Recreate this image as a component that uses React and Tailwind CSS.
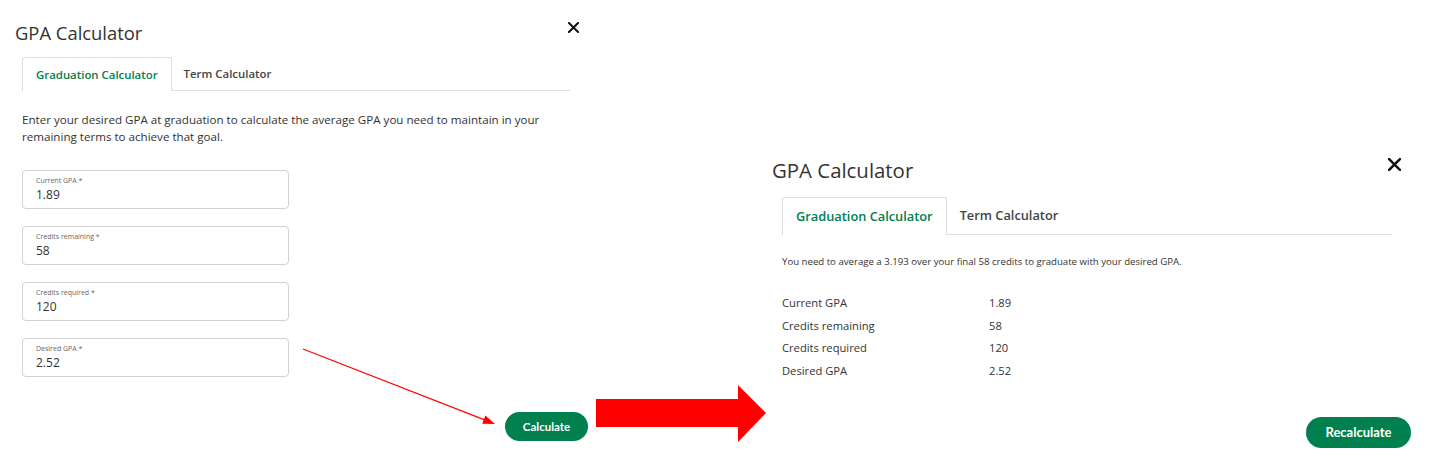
import React from "react";

const green = "#00804e";

function CloseIcon({ size = 11, stroke = 2.2 }) {
  return (
    <svg width={size} height={size} viewBox="0 0 12 12" className="block">
      <path d="M1 1 L11 11 M11 1 L1 11" stroke="#111" strokeWidth={stroke} strokeLinecap="square" fill="none" />
    </svg>
  );
}

function Field({ label, value }) {
  return (
    <div className="w-[267px] h-[39px] rounded-[4px] border border-[#d2d2d2] bg-white pl-[13px] pt-[5px]">
      <div className="text-[7px] leading-[10px] text-[#666]">{label} *</div>
      <div className="text-[12px] leading-[16px] mt-[1px] text-[#333]">{value}</div>
    </div>
  );
}

export default function App() {
  const rows = [
    ["Current GPA", "1.89"],
    ["Credits remaining", "58"],
    ["Credits required", "120"],
    ["Desired GPA", "2.52"],
  ];
  return (
    <div
      className="relative w-[1436px] h-[461px] bg-white flex items-start overflow-hidden text-[#333]"
      style={{ fontFamily: '"Open Sans", "Noto Sans", sans-serif' }}
    >
      {/* Left panel */}
      <div className="w-[588px] shrink-0 flex flex-col">
        <div className="flex items-start justify-between pl-[15px] pr-[9px] mt-[21px]">
          <div className="text-[18.4px] leading-[24px] text-[#333]">GPA Calculator</div>
          <div className="mt-[1px]">
            <CloseIcon size={11} stroke={2.2} />
          </div>
        </div>
        <div className="ml-[22px] w-[548px] mt-[12px] flex border-b border-[#dedede] h-[34px]">
          <div className="h-[34px] -mb-px px-[13px] flex items-center border-l border-t border-r border-[#dedede] rounded-t-[3px] bg-white text-[11.4px] font-semibold" style={{ color: green }}>
            Graduation Calculator
          </div>
          <div className="h-[34px] px-[12px] flex items-center text-[11.4px] font-semibold text-[#444]">
            Term Calculator
          </div>
        </div>
        <p className="ml-[22px] w-[548px] mt-[20px] text-[11.6px] leading-[17px] text-[#333]">
          Enter your desired GPA at graduation to calculate the average GPA you need to maintain in your remaining terms to achieve that goal.
        </p>
        <div className="ml-[22px] mt-[25px] flex flex-col gap-[17px]">
          <Field label="Current GPA" value="1.89" />
          <Field label="Credits remaining" value="58" />
          <Field label="Credits required" value="120" />
          <Field label="Desired GPA" value="2.52" />
        </div>
        <div className="self-end mt-[35px]">
          <button
            className="w-[83px] h-[29px] rounded-full text-white text-[11.5px] font-bold flex items-center justify-center"
            style={{ backgroundColor: green, fontFamily: 'Lato, "Open Sans", sans-serif' }}
          >
            Calculate
          </button>
        </div>
      </div>

      {/* Big red arrow */}
      <div className="ml-[8px] mt-[385px] shrink-0">
        <svg width="170" height="57" viewBox="0 0 170 57" className="block">
          <polygon points="0,14 142,14 142,0 170,28 142,57 142,42 0,42" fill="#ff0000" />
        </svg>
      </div>

      {/* Right panel */}
      <div className="ml-[6px] w-[639px] shrink-0 flex flex-col">
        <div className="flex items-start justify-between pr-[10px] mt-[156px]">
          <div className="text-[20.4px] leading-[28px] text-[#333]">GPA Calculator</div>
          <div className="mt-[2px]">
            <CloseIcon size={13} stroke={2.3} />
          </div>
        </div>
        <div className="ml-[10px] w-[610px] mt-[13px] flex border-b border-[#dedede] h-[38px]">
          <div className="h-[38px] -mb-px px-[13px] flex items-center border-l border-t border-r border-[#dedede] rounded-t-[3px] bg-white text-[12.8px] font-semibold" style={{ color: green }}>
            Graduation Calculator
          </div>
          <div className="h-[38px] px-[13px] flex items-center text-[12.8px] font-semibold text-[#444]">
            Term Calculator
          </div>
        </div>
        <p className="ml-[10px] mt-[20px] text-[9.65px] leading-[14px] text-[#333]">
          You need to average a 3.193 over your final 58 credits to graduate with your desired GPA.
        </p>
        <div className="ml-[10px] mt-[23px] grid grid-cols-[207px_1fr] text-[11.2px] text-[#333]">
          {rows.map(([k, v]) => (
            <React.Fragment key={k}>
              <div className="h-[22.7px] leading-[22.7px]">{k}</div>
              <div className="h-[22.7px] leading-[22.7px]">{v}</div>
            </React.Fragment>
          ))}
        </div>
        <div className="self-end mt-[34px]">
          <button
            className="w-[105px] h-[31px] rounded-full text-white text-[13px] font-bold flex items-center justify-center"
            style={{ backgroundColor: green, fontFamily: 'Lato, "Open Sans", sans-serif' }}
          >
            Recalculate
          </button>
        </div>
      </div>

      {/* Thin annotation arrow */}
      <svg className="absolute left-0 top-0 pointer-events-none" width="1436" height="461">
        <line x1="303" y1="349" x2="484" y2="419.6" stroke="#ff0000" strokeWidth="1.2" />
        <polygon points="495,424 482.2,423.8 485.4,415.4" fill="#ff0000" />
      </svg>
    </div>
  );
}
